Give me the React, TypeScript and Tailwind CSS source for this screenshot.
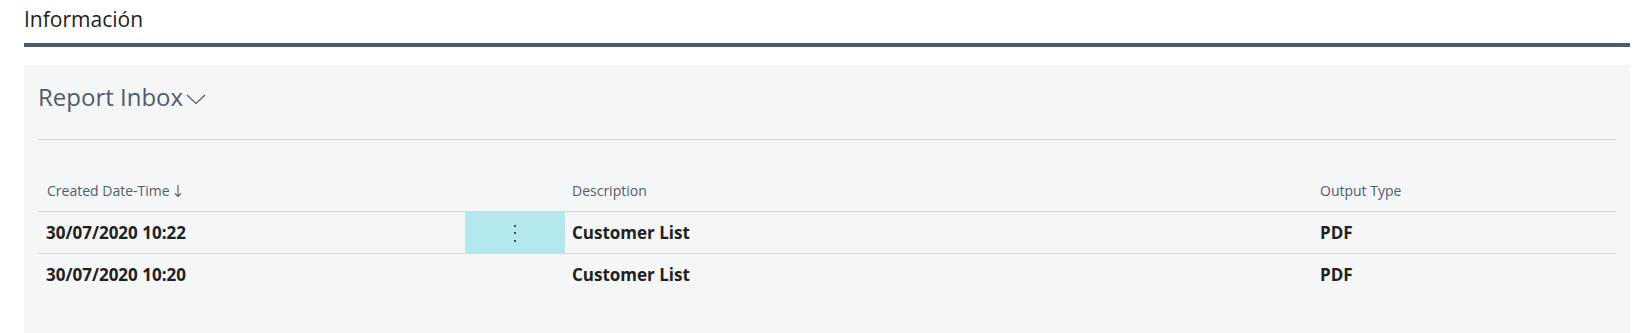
const rows = [
  { created: "30/07/2020 10:22", description: "Customer List", type: "PDF", selected: true },
  { created: "30/07/2020 10:20", description: "Customer List", type: "PDF", selected: false },
];

function Chevron() {
  return (
    <svg width="20" height="11" viewBox="0 0 20 11" className="ml-[3px] mt-[4px]">
      <path d="M1 1 L10 9.5 L19 1" fill="none" stroke="#505c6d" strokeWidth="1.2" />
    </svg>
  );
}

function SortArrow() {
  return (
    <svg width="8" height="14" viewBox="0 0 8 14" className="ml-[4px]">
      <path d="M4 1 V12.5 M1 9.5 L4 12.5 L7 9.5" fill="none" stroke="#505c6d" strokeWidth="1.1" />
    </svg>
  );
}

function Dots() {
  return (
    <div className="flex flex-col items-center gap-[5.5px] mt-[1px]">
      <span className="w-[2px] h-[2px] bg-[#212121] rounded-full" />
      <span className="w-[2px] h-[2px] bg-[#212121] rounded-full" />
      <span className="w-[2px] h-[2px] bg-[#212121] rounded-full" />
    </div>
  );
}

export default function App() {
  return (
    <div
      className="w-[1649px] h-[333px] bg-white pl-[24px] pr-[19px] overflow-hidden"
      style={{ fontFamily: '"Open Sans", "Noto Sans", sans-serif' }}
    >
      <div className="h-[43px] pt-[5px] text-[21px] leading-[28px] text-[#212121]">Información</div>
      <div className="h-[4px] bg-[#4f5b6d]" />

      <div className="mt-[18px] h-[268px] bg-[#f5f6f8] pl-[14px] pr-[14px]">
        <div className="pt-[16px] h-[48px] flex items-center">
          <span className="text-[24px] leading-[32px] text-[#505c6d]">Report Inbox</span>
          <Chevron />
        </div>
        <div className="mt-[26px] border-t border-[#d6d8db]" />

        <div className="h-[71px] flex items-end pb-[11px] text-[14px] leading-[18px] text-[#505c6d]">
          <div className="w-[427px] pl-[9px] flex items-center">
            Created Date-Time
            <SortArrow />
          </div>
          <div className="w-[100px]" />
          <div className="w-[747px] pl-[7px]">Description</div>
          <div className="flex-1 pl-[8px]">Output Type</div>
        </div>

        {rows.map((r, i) => (
          <div key={i} className="h-[42px] flex border-t border-[#d6d8db] text-[17px] font-bold text-[#212121]">
            <div className="w-[427px] pl-[8px] flex items-center">{r.created}</div>
            <div className={`w-[100px] flex items-center justify-center ${r.selected ? "bg-[#b3e9ec]" : ""}`}>
              {r.selected && <Dots />}
            </div>
            <div className="w-[747px] pl-[7px] flex items-center">{r.description}</div>
            <div className="flex-1 pl-[8px] flex items-center">{r.type}</div>
          </div>
        ))}
      </div>
    </div>
  );
}
